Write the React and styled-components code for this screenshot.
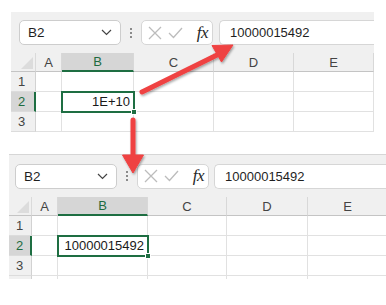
import React from "react";
import styled, { createGlobalStyle } from "styled-components";

const GlobalStyle = createGlobalStyle`
	body {
		margin: 0;
		background: #ffffff;
		font-family: "Liberation Sans", Arial, sans-serif;
	}
`;

//Styles

const Page = styled.div`
	position: relative;
	width: 386px;
	height: 305px;
	overflow: hidden;
	background: #ffffff;
`;

const Panel = styled.div`
	margin: ${(pr) => pr.$top}px 0 0 ${(pr) => pr.$left}px;
	width: ${(pr) => pr.$width}px;
	background: #f0f0f0;
	border-top: ${(pr) => (pr.$line ? "1px solid #d6d6d6" : "none")};
	overflow: hidden;
`;

const FormulaBar = styled.div`
	display: flex;
	align-items: center;
	height: ${(pr) => pr.$height}px;
	padding-left: ${(pr) => pr.$pad}px;
	box-sizing: border-box;
`;

const NameBox = styled.div`
	display: flex;
	align-items: center;
	justify-content: space-between;
	width: 102px;
	height: 25px;
	box-sizing: border-box;
	padding: 0 8px 0 8px;
	background: #ffffff;
	border: 1px solid #cdcdcd;
	border-radius: 5px;
	font-size: 13.5px;
	color: #1f1f1f;
`;

const Dots = styled.div`
	display: flex;
	flex-direction: column;
	gap: 2px;
	margin: 0 9px;
	span {
		width: 2px;
		height: 2px;
		background: #8a8a8a;
	}
`;

const FxBox = styled.div`
	display: flex;
	align-items: center;
	width: 72px;
	height: 25px;
	box-sizing: border-box;
	padding: 0 4px 0 6px;
	gap: 6px;
	background: #ffffff;
	border: 1px solid #d6d6d6;
	border-radius: 5px;
`;

const Fx = styled.span`
	margin-left: auto;
	font-family: "Liberation Serif", "Times New Roman", serif;
	font-style: italic;
	font-size: 17px;
	color: #262626;
	letter-spacing: -0.5px;
`;

const FormulaInput = styled.div`
	flex: 1;
	display: flex;
	align-items: center;
	height: 25px;
	margin-left: ${(pr) => pr.$gap}px;
	padding-left: 10px;
	box-sizing: border-box;
	background: #ffffff;
	border: 1px solid #d6d6d6;
	border-right: none;
	border-radius: 5px 0 0 5px;
	font-size: 13px;
	color: #1f1f1f;
`;

const Sheet = styled.div`
	display: grid;
	grid-template-columns: ${(pr) => pr.$cols};
	grid-template-rows: 19px repeat(4, 20px);
	height: ${(pr) => pr.$height}px;
	overflow: hidden;
	background: #ffffff;
`;

const Corner = styled.div`
	position: relative;
	background: #f0f0f0;
	border-bottom: 1px solid #c4c4c4;
	border-right: 1px solid #dadada;
	&::after {
		content: "";
		position: absolute;
		right: 2px;
		bottom: 2px;
		border-left: 12px solid transparent;
		border-bottom: 12px solid #dcdcdc;
	}
`;

const ColHead = styled.div`
	display: flex;
	align-items: center;
	justify-content: center;
	font-size: 13px;
	color: ${(pr) => (pr.$active ? "#1e6b3f" : "#444444")};
	background: ${(pr) => (pr.$active ? "#d6d6d6" : "#f0f0f0")};
	border-right: 1px solid #d8d8d8;
	border-bottom: ${(pr) =>
		pr.$active ? "2px solid #1e6e42" : "1px solid #c4c4c4"};
	box-sizing: border-box;
`;

const RowHead = styled.div`
	display: flex;
	align-items: center;
	padding-left: 7px;
	font-size: 13px;
	color: ${(pr) => (pr.$active ? "#1e6b3f" : "#444444")};
	background: ${(pr) => (pr.$active ? "#d6d6d6" : "#f0f0f0")};
	border-right: ${(pr) =>
		pr.$active ? "2px solid #1e6e42" : "1px solid #d2d2d2"};
	border-bottom: 1px solid #dcdcdc;
	box-sizing: border-box;
`;

const Cell = styled.div`
	position: relative;
	display: flex;
	align-items: center;
	justify-content: flex-end;
	padding-right: 3px;
	font-size: 13px;
	color: #1a1a1a;
	border-right: 1px solid #e1e1e1;
	border-bottom: 1px solid #e1e1e1;
	box-sizing: border-box;
	${(pr) =>
		pr.$selected &&
		`
		z-index: 2;
		outline: 2px solid #1e6e42;
		outline-offset: -1px;
		&::after {
			content: "";
			position: absolute;
			right: -4px;
			bottom: -4px;
			width: 6px;
			height: 6px;
			background: #1e6e42;
			border: 1px solid #ffffff;
			box-sizing: border-box;
		}
	`}
`;

const ArrowLayer = styled.svg`
	position: absolute;
	left: 0;
	top: 0;
	pointer-events: none;
`;

const CrossIcon = () => (
	<svg width="14" height="14" viewBox="0 0 14 14">
		<path d="M1 1 L13 13 M13 1 L1 13" stroke="#bcbcbc" strokeWidth="1.3" fill="none" />
	</svg>
);

const CheckIcon = () => (
	<svg width="15" height="12" viewBox="0 0 15 12">
		<path d="M1 6 L5.5 10.5 L14 1" stroke="#bcbcbc" strokeWidth="1.3" fill="none" />
	</svg>
);

const Chevron = () => (
	<svg width="11" height="7" viewBox="0 0 11 7">
		<path d="M1 1 L5.5 5.5 L10 1" stroke="#444" strokeWidth="1.2" fill="none" />
	</svg>
);

const ExcelPanel = (props) => {
	const letters = ["A", "B", "C", "D", "E"];
	const rows = [1, 2, 3, 4];
	return (
		<Panel $top={props.top} $left={props.left} $width={props.width} $line={props.line}>
			<FormulaBar $height={props.barHeight} $pad={props.pad}>
				<NameBox>
					B2
					<Chevron />
				</NameBox>
				<Dots>
					<span />
					<span />
					<span />
				</Dots>
				<FxBox>
					<CrossIcon />
					<CheckIcon />
					<Fx>fx</Fx>
				</FxBox>
				<FormulaInput $gap={props.inputGap}>10000015492</FormulaInput>
			</FormulaBar>
			<Sheet $cols={props.cols} $height={props.sheetHeight}>
				<Corner />
				{letters.map((l) => (
					<ColHead key={l} $active={l === "B"}>
						{l}
					</ColHead>
				))}
				{rows.map((r) => (
					<React.Fragment key={r}>
						{/* row 4 is only a sliver at the bottom edge, no label shows */}
						<RowHead $active={r === 2}>{r < 4 ? r : ""}</RowHead>
						{letters.map((l) => (
							<Cell key={l} $selected={r === 2 && l === "B"}>
								{r === 2 && l === "B" ? props.value : ""}
							</Cell>
						))}
					</React.Fragment>
				))}
			</Sheet>
		</Panel>
	);
};

const App = () => {
	return (
		<Page>
			<GlobalStyle />
			<ExcelPanel
				top={12}
				left={11}
				width={363}
				barHeight={41}
				pad={8}
				inputGap={6}
				cols="25px 26px 72px 80px 80px 80px"
				sheetHeight={79}
				value="1E+10"
			/>
			<ExcelPanel
				top={22}
				left={9}
				width={377}
				line
				barHeight={42}
				pad={6}
				inputGap={5}
				cols="23px 26px 90px 79px 81px 80px"
				sheetHeight={82}
				value="10000015492"
			/>
			<ArrowLayer width="386" height="305" viewBox="0 0 386 305">
				<defs>
					<filter id="shadow" x="-20%" y="-20%" width="140%" height="140%">
						<feDropShadow dx="1" dy="1.5" stdDeviation="1.2" floodColor="#000" floodOpacity="0.35" />
					</filter>
				</defs>
				<g filter="url(#shadow)" fill="#ef4242" stroke="#ef4242">
					<line x1="142" y1="92" x2="219" y2="54" strokeWidth="5" strokeLinecap="round" />
					<polygon points="233,45 221.5,62 212,45.5" strokeWidth="1" strokeLinejoin="round" />
					<line x1="133" y1="120" x2="133" y2="157" strokeWidth="5" strokeLinecap="round" />
					<polygon points="122.5,155 143.5,155 133,173" strokeWidth="1" strokeLinejoin="round" />
				</g>
			</ArrowLayer>
		</Page>
	);
};

export default App;
